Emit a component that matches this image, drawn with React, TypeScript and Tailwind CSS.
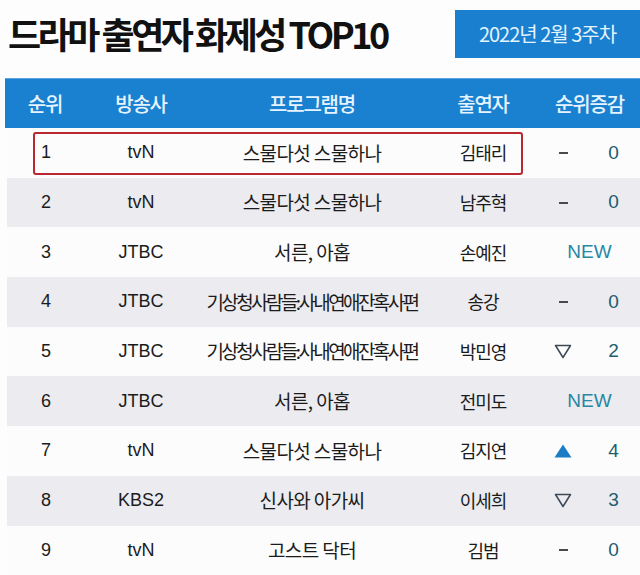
import React from "react";

type Change = { kind: "same" } | { kind: "new" } | { kind: "up"; n: number } | { kind: "down"; n: number };

const rows: { rank: number; ch: string; prog: string; actor: string; change: Change; tight?: boolean }[] = [
  { rank: 1, ch: "tvN", prog: "스물다섯 스물하나", actor: "김태리", change: { kind: "same" } },
  { rank: 2, ch: "tvN", prog: "스물다섯 스물하나", actor: "남주혁", change: { kind: "same" } },
  { rank: 3, ch: "JTBC", prog: "서른, 아홉", actor: "손예진", change: { kind: "new" } },
  { rank: 4, ch: "JTBC", prog: "기상청사람들:사내연애잔혹사편", actor: "송강", change: { kind: "same" }, tight: true },
  { rank: 5, ch: "JTBC", prog: "기상청사람들:사내연애잔혹사편", actor: "박민영", change: { kind: "down", n: 2 }, tight: true },
  { rank: 6, ch: "JTBC", prog: "서른, 아홉", actor: "전미도", change: { kind: "new" } },
  { rank: 7, ch: "tvN", prog: "스물다섯 스물하나", actor: "김지연", change: { kind: "up", n: 4 } },
  { rank: 8, ch: "KBS2", prog: "신사와 아가씨", actor: "이세희", change: { kind: "down", n: 3 } },
  { rank: 9, ch: "tvN", prog: "고스트 닥터", actor: "김범", change: { kind: "same" } },
];

const font = { fontFamily: '"Liberation Sans", "Noto Sans CJK KR", sans-serif' };
const cjk = { fontFamily: '"Noto Sans CJK KR", sans-serif' };

function ChangeCell({ c }: { c: Change }) {
  if (c.kind === "new") {
    return (
      <div className="flex w-[101px] items-center justify-center text-[19px] text-[#2788a3]">NEW</div>
    );
  }
  let icon: React.ReactNode;
  let num = 0;
  if (c.kind === "same") {
    icon = <div className="h-[2px] w-[9px] bg-[#4a4a4a]" />;
  } else if (c.kind === "down") {
    num = c.n;
    icon = (
      <svg width="18" height="15" viewBox="0 0 18 15">
        <polygon points="1.5,1.5 16.5,1.5 9,13.5" fill="none" stroke="#3d4a55" strokeWidth="1.5" strokeLinejoin="round" />
      </svg>
    );
  } else {
    num = c.n;
    icon = (
      <svg width="18" height="14" viewBox="0 0 18 14">
        <polygon points="9,0.5 17.5,13.5 0.5,13.5" fill="#1d7dc4" />
      </svg>
    );
  }
  return (
    <div className="flex w-[101px] items-center">
      <div className="flex w-[48px] items-center justify-center">{icon}</div>
      <div className="flex w-[53px] items-center justify-center text-[19px] text-[#205d70]">{num}</div>
    </div>
  );
}

export default function App() {
  return (
    <div className="h-[575px] w-[640px] overflow-hidden bg-[#fdfdfe] text-[#1b1b1b]" style={font}>
      <div className="flex h-[78px] items-start justify-between">
        <div
          className="mt-[9px] pl-[8px] text-[36px] font-bold leading-[48px] tracking-[-3.5px] text-[#111]"
          style={cjk}
        >
          드라마 출연자 화제성 TOP10
        </div>
        <div
          className="mt-[10px] flex h-[48px] w-[185px] items-center justify-center bg-[#1a7fcf] text-[20px] tracking-[-1px] text-[#e4f4ff]"
          style={cjk}
        >
          2022년 2월 3주차
        </div>
      </div>

      <div className="ml-[5px]">
        <div
          className="flex h-[50px] items-center border-t border-[#5aa7e0] bg-[#1a80d0] text-[20px] font-medium tracking-[-1.2px] text-[#e6f4ff]"
          style={cjk}
        >
          <div className="w-[80px] text-center">순위</div>
          <div className="w-[112px] text-center">방송사</div>
          <div className="w-[230px] text-center">프로그램명</div>
          <div className="w-[112px] text-center">출연자</div>
          <div className="w-[101px] text-center">순위증감</div>
        </div>

        {rows.map((r, i) => (
          <div
            key={r.rank}
            className={`relative ml-[2px] flex h-[49.7px] items-center ${i % 2 === 1 ? "bg-[#ebebf0]" : "bg-[#fcfcfd]"}`}
          >
            <div className="w-[78px] text-center text-[18px]">{r.rank}</div>
            <div className="w-[112px] text-center text-[18px]">{r.ch}</div>
            <div
              className={`w-[230px] whitespace-nowrap text-center text-[19px] ${r.tight ? "tracking-[-2.6px]" : "tracking-[-0.6px]"}`}
              style={cjk}
            >
              {r.prog}
            </div>
            <div className="w-[112px] text-center text-[18px] tracking-[-1px]" style={cjk}>
              {r.actor}
            </div>
            <ChangeCell c={r.change} />
            {r.rank === 1 && (
              <div className="pointer-events-none absolute left-[26px] top-[4px] h-[43px] w-[490px] rounded-[3px] border-2 border-[#b8282e]" />
            )}
          </div>
        ))}
      </div>
    </div>
  );
}
